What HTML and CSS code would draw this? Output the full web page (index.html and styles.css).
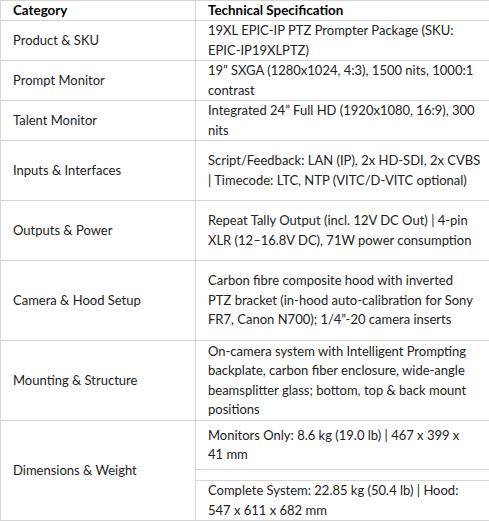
FILE: index.html
```html
<!DOCTYPE html>
<html>
<head>
<meta charset="utf-8">
<link rel="stylesheet" href="styles.css">
</head>
<body>
<table class="spec">
  <colgroup><col class="c1"><col class="c2"></colgroup>
  <thead>
    <tr class="r1"><th>Category</th><th>Technical Specification</th></tr>
  </thead>
  <tbody>
    <tr class="r2"><td>Product &amp; SKU</td><td>19XL EPIC-IP PTZ Prompter Package (SKU:<br>EPIC-IP19XLPTZ)</td></tr>
    <tr class="r2"><td>Prompt Monitor</td><td>19” SXGA (1280x1024, 4:3), 1500 nits, 1000:1<br>contrast</td></tr>
    <tr class="r2"><td>Talent Monitor</td><td>Integrated 24” Full HD (1920x1080, 16:9), 300<br>nits</td></tr>
    <tr class="r3"><td>Inputs &amp; Interfaces</td><td>Script/Feedback: LAN (IP), 2x HD-SDI, 2x CVBS<br>| Timecode: LTC, NTP (VITC/D-VITC optional)</td></tr>
    <tr class="r3"><td>Outputs &amp; Power</td><td>Repeat Tally Output (incl. 12V DC Out) | 4-pin<br>XLR (12–16.8V DC), 71W power consumption</td></tr>
    <tr class="r4"><td>Camera &amp; Hood Setup</td><td>Carbon fibre composite hood with inverted<br>PTZ bracket (in-hood auto-calibration for Sony<br>FR7, Canon N700); 1/4”-20 camera inserts</td></tr>
    <tr class="r4"><td>Mounting &amp; Structure</td><td>On-camera system with Intelligent Prompting<br>backplate, carbon fiber enclosure, wide-angle<br>beamsplitter glass; bottom, top &amp; back mount<br>positions</td></tr>
    <tr class="d1"><td rowspan="3">Dimensions &amp; Weight</td><td>Monitors Only: 8.6 kg (19.0 lb) | 467 x 399 x<br>41 mm</td></tr>
    <tr class="d2"><td class="empty"></td></tr>
    <tr class="d3"><td>Complete System: 22.85 kg (50.4 lb) | Hood:<br>547 x 611 x 682 mm</td></tr>
  </tbody>
</table>
</body>
</html>
```

FILE: styles.css
```css
html, body {
  margin: 0;
  padding: 0;
  background: #ffffff;
}
.spec {
  border-collapse: collapse;
  table-layout: fixed;
  width: 489px;
  font-family: "Lato", "Open Sans", sans-serif;
  font-size: 13px;
  line-height: 19.5px;
  color: #222222;
}
.c1 { width: 195px; }
.c2 { width: 294px; }
.spec th,
.spec td {
  border: 1px solid #d6d6d6;
  padding: 0 4px 0 12px;
  vertical-align: middle;
  text-align: left;
  white-space: nowrap;
}
.spec th {
  font-weight: bold;
  color: #000;
  font-size: 13.4px;
  line-height: 19px;
}
.r1 { height: 20px; }
.r2 { height: 40px; }
.r3 { height: 60px; }
.r4 { height: 80px; }
.d1 { height: 49px; }
.d2 { height: 11px; }
.d3 { height: 39px; }
.spec td.empty { padding: 0; line-height: 0; }
```
